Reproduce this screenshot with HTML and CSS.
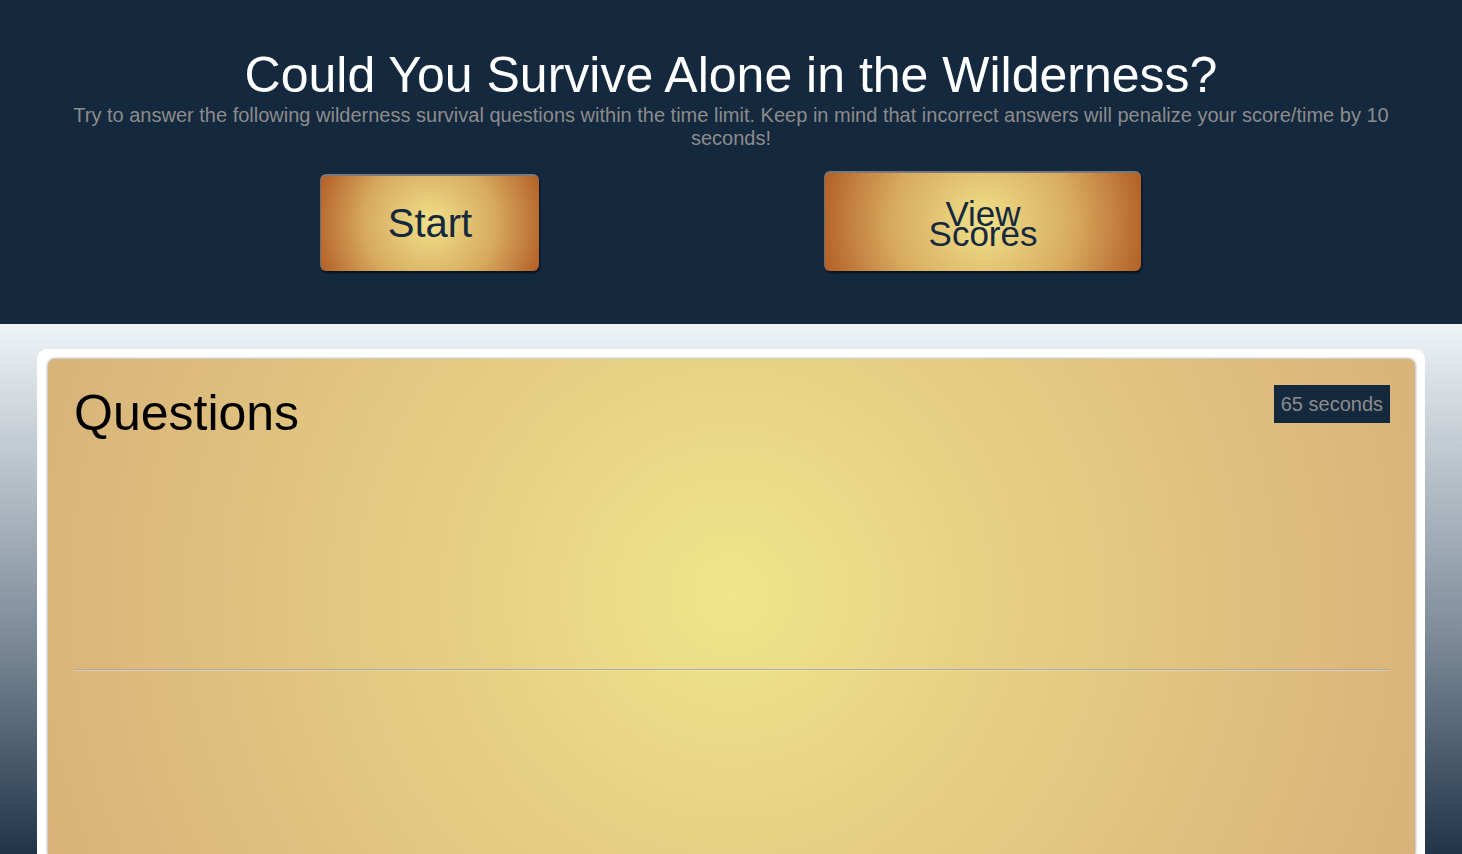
FILE: index.html
```html
<!DOCTYPE html>
<html lang="en">
<head>
<meta charset="utf-8">
<title>Could You Survive Alone in the Wilderness?</title>
<link rel="stylesheet" href="styles.css">
</head>
<body>
<header class="hero">
  <h1 class="title">Could You Survive Alone in the Wilderness?</h1>
  <p class="lead">Try to answer the following wilderness survival questions within the time limit. Keep in mind that incorrect answers will penalize your score/time by 10 seconds!</p>
  <div class="actions">
    <button class="btn btn-start" type="button">Start</button>
    <button class="btn btn-scores" type="button"><span class="stack">View Scores</span></button>
  </div>
</header>
<main class="board">
  <div class="frame">
    <section class="card">
      <div class="card-head">
        <h2 class="card-title">Questions</h2>
        <span class="timer">65 seconds</span>
      </div>
      <div class="question-area"></div>
      <hr class="divider">
      <div class="answers"></div>
    </section>
  </div>
</main>
</body>
</html>
```
FILE: styles.css
```css
* { box-sizing: border-box; }

html, body {
  margin: 0;
  padding: 0;
}

body {
  font-family: "Liberation Sans", Arial, sans-serif;
  background: #14283e;
  overflow: hidden;
}

.hero {
  background: #14283e;
  padding: 50px 60px 53px;
  text-align: center;
}

.title {
  margin: 0;
  font-size: 50px;
  line-height: 50px;
  font-weight: 400;
  color: #ffffff;
}

.lead {
  margin: 4px 0 0;
  font-size: 20px;
  line-height: 23px;
  color: #8c8c8c;
}

.actions {
  display: flex;
  align-items: flex-end;
  gap: 285px;
  margin-top: 21px;
  padding-left: 260px;
}

.btn {
  font-family: "Liberation Sans", Arial, sans-serif;
  color: #14283e;
  background: radial-gradient(circle farthest-corner at 50% 50%, #f0e18a 0%, #d7aa5f 55%, #b35f26 100%);
  border: 0;
  border-top: 2px solid #7a7a7a;
  border-left: 1px solid #6f6f6f;
  border-radius: 6px;
  box-shadow: 1px 2px 2px rgba(0, 0, 0, 0.55);
  display: flex;
  align-items: center;
  justify-content: center;
  padding: 0;
}

.btn-start {
  width: 219px;
  height: 97px;
  font-size: 40px;
}

.btn-scores {
  width: 317px;
  height: 100px;
  font-size: 35px;
  line-height: 20px;
}

.stack {
  display: inline-block;
  width: min-content;
  padding-top: 3px;
}

.board {
  background: linear-gradient(to bottom, #eef3f6 0px, #7c8a98 316px, #14283e 560px);
  padding: 25px 37px 0;
  min-height: 540px;
}

.frame {
  background: #ffffff;
  border-radius: 10px 10px 0 0;
  padding: 9px 9px 10px 10px;
}

.card {
  border: 1px solid #cfcfcf;
  border-radius: 8px;
  box-shadow: 0 0 2px rgba(0, 0, 0, 0.35);
  background: radial-gradient(circle farthest-corner at 50% 47%, #f0e58b 0%, #e6d083 35%, #d8b27a 100%);
  padding: 26px 26px 26px 26px;
}

.card-head {
  display: flex;
  justify-content: space-between;
  align-items: flex-start;
}

.card-title {
  margin: 2px 0 0;
  font-size: 50px;
  line-height: 53px;
  font-weight: 400;
  color: #000000;
}

.timer {
  background: #14283e;
  color: #8c8c8c;
  font-size: 20px;
  line-height: 38px;
  padding: 0 7px 0 7px;
  margin-right: -1px;
}

.question-area {
  height: 229px;
}

.divider {
  margin: 0;
  border: 0;
  border-top: 1px solid #a8abaf;
  border-bottom: 1px solid rgba(255, 255, 255, 0.25);
  height: 0;
}

.answers {
  height: 162px;
}
```
